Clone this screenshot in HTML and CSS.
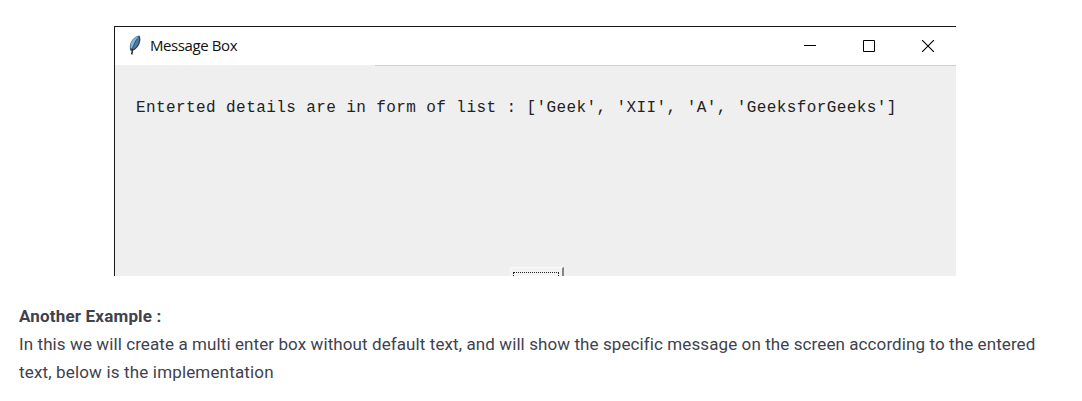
FILE: index.html
```html
<!DOCTYPE html>
<html lang="en">
<head>
<meta charset="utf-8">
<title>Message Box</title>
<link rel="stylesheet" href="styles.css">
</head>
<body>
<main class="article">
  <section class="window">
    <header class="titlebar">
      <svg class="feather" viewBox="0 0 14 20" width="14" height="20">
        <path d="M2.500 16C0 10 4 2 11 .5c2.500 4 0 12-6 15z" fill="#4f7ca3"/>
        <path d="M3 13C2 8 5 3 10 1.500 8 6 5 9 4 14z" fill="#8ab2ce"/>
        <path d="M11 1c2 4 0 11-6 14" fill="none" stroke="#2b455f" stroke-width="1.200"/>
        <path d="M9 4C6.500 8 5 12 4 15" fill="none" stroke="#36556f"/>
        <path d="M2.500 14l2 1-.8 4.500" fill="none" stroke="#3a3734" stroke-width="1.600"/>
      </svg>
      <h1 class="title">Message Box</h1>
      <div class="controls">
        <svg width="12" height="12" viewBox="0 0 12 12"><path d="M0 5.500h12" stroke="#000"/></svg>
        <svg width="12" height="12" viewBox="0 0 12 12"><path d="M.5.5h11v11H.5z" fill="none" stroke="#000"/></svg>
        <svg width="12" height="12" viewBox="0 0 12 12"><path d="M0 0l12 12M12 0L0 12" stroke="#000" stroke-width="1.100"/></svg>
      </div>
    </header>
    <div class="content">
      <p class="message">Enterted details are in form of list : ['Geek', 'XII', 'A', 'GeeksforGeeks']</p>
      <div class="button"><div class="focus"></div></div>
    </div>
  </section>
  <section class="prose">
    <h2 class="heading">Another Example :</h2>
    <p class="line first">In this we will create a multi enter box without default text, and will show the specific message on the screen according to the entered</p>
    <p class="line second">text, below is the implementation</p>
  </section>
</main>
</body>
</html>
```
FILE: styles.css
```css
* { box-sizing: border-box; }
body { margin: 0; background: #fff; }
h1, h2, p { margin: 0; font-weight: 400; white-space: nowrap; }
.article { height: 401px; padding-top: 26px; overflow: hidden; }
.window {
  display: flex;
  flex-direction: column;
  width: 842px;
  height: 250px;
  margin-left: 114px;
  border-top: 1px solid #17171b;
  border-left: 1px solid #17171b;
  overflow: hidden;
}
.titlebar { display: flex; height: 38px; padding: 8px 22px 0 13px; }
.feather { flex: none; }
.title {
  margin-left: 8px;
  padding-top: 0;
  font: 15px/20px "Open Sans", "Noto Sans", sans-serif;
  letter-spacing: -0.4px;
  color: #111;
}
.controls { display: flex; gap: 47px; margin-left: auto; padding-top: 5px; }
.content {
  display: flex;
  flex-direction: column;
  justify-content: space-between;
  flex: 1;
  padding: 33px 0 0 21px;
  background: linear-gradient(90deg, #efefef 260px, #d0d0d0 260px) 0 0 / 100% 1px no-repeat #efefef;
}
.message {
  font: 16px/20px "Liberation Mono", monospace;
  letter-spacing: 0.41px;
  color: #222;
}
.button {
  width: 54px;
  height: 9px;
  margin-left: 374px;
  padding: 4px 3px 0 2px;
  background: #f3f3f3;
  border-top: 1px solid #fafafa;
  border-left: 1px solid #fafafa;
  border-right: 2px solid #858585;
}
.focus { height: 4px; border: 1px dotted #222; border-bottom: 0; }
.prose { padding: 26px 0 0 19px; color: #40424e; font-family: Roboto, sans-serif; font-size: 17px; line-height: 28px; }
.heading { font-size: 17px; font-weight: 700; line-height: 28px; letter-spacing: 0.18px; }
.first { letter-spacing: 0.094px; }
.second { letter-spacing: 0.16px; }
```
